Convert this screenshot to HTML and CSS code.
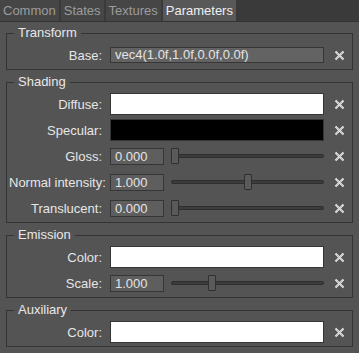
FILE: index.html
```html
<!DOCTYPE html>
<html lang="en">
<head>
  <meta charset="UTF-8">
  <title>Material parameters</title>
  <link rel="stylesheet" href="styles.css">
</head>
<body>
<div class="tabs">
  <div class="tab">Common</div>
  <div class="tab">States</div>
  <div class="tab">Textures</div>
  <div class="tab active">Parameters</div>
</div>

<div class="panel">
  <fieldset class="group">
    <legend>Transform</legend>
    <div class="row">
      <label>Base:</label>
      <div class="text-box">vec4(1.0f,1.0f,0.0f,0.0f)</div>
      <span class="clear"><svg width="11" height="11" viewBox="0 0 11 11"><path d="M1.5 1.5L9.5 9.5M9.5 1.5L1.5 9.5" class="x-outer"/><path d="M1.5 1.5L9.5 9.5M9.5 1.5L1.5 9.5" class="x-inner"/></svg></span>
    </div>
  </fieldset>

  <fieldset class="group">
    <legend>Shading</legend>
    <div class="row">
      <label>Diffuse:</label>
      <div class="color-box white"></div>
      <span class="clear"><svg width="11" height="11" viewBox="0 0 11 11"><path d="M1.5 1.5L9.5 9.5M9.5 1.5L1.5 9.5" class="x-outer"/><path d="M1.5 1.5L9.5 9.5M9.5 1.5L1.5 9.5" class="x-inner"/></svg></span>
    </div>
    <div class="row">
      <label>Specular:</label>
      <div class="color-box black"></div>
      <span class="clear"><svg width="11" height="11" viewBox="0 0 11 11"><path d="M1.5 1.5L9.5 9.5M9.5 1.5L1.5 9.5" class="x-outer"/><path d="M1.5 1.5L9.5 9.5M9.5 1.5L1.5 9.5" class="x-inner"/></svg></span>
    </div>
    <div class="row">
      <label>Gloss:</label>
      <div class="number-slider">
        <div class="num-box">0.000</div>
        <div class="slider"><div class="groove"></div><div class="handle" style="left: 0px"></div></div>
      </div>
      <span class="clear"><svg width="11" height="11" viewBox="0 0 11 11"><path d="M1.5 1.5L9.5 9.5M9.5 1.5L1.5 9.5" class="x-outer"/><path d="M1.5 1.5L9.5 9.5M9.5 1.5L1.5 9.5" class="x-inner"/></svg></span>
    </div>
    <div class="row">
      <label>Normal intensity:</label>
      <div class="number-slider">
        <div class="num-box">1.000</div>
        <div class="slider"><div class="groove"></div><div class="handle" style="left: 73px"></div></div>
      </div>
      <span class="clear"><svg width="11" height="11" viewBox="0 0 11 11"><path d="M1.5 1.5L9.5 9.5M9.5 1.5L1.5 9.5" class="x-outer"/><path d="M1.5 1.5L9.5 9.5M9.5 1.5L1.5 9.5" class="x-inner"/></svg></span>
    </div>
    <div class="row">
      <label>Translucent:</label>
      <div class="number-slider">
        <div class="num-box">0.000</div>
        <div class="slider"><div class="groove"></div><div class="handle" style="left: 0px"></div></div>
      </div>
      <span class="clear"><svg width="11" height="11" viewBox="0 0 11 11"><path d="M1.5 1.5L9.5 9.5M9.5 1.5L1.5 9.5" class="x-outer"/><path d="M1.5 1.5L9.5 9.5M9.5 1.5L1.5 9.5" class="x-inner"/></svg></span>
    </div>
  </fieldset>

  <fieldset class="group">
    <legend>Emission</legend>
    <div class="row">
      <label>Color:</label>
      <div class="color-box white"></div>
      <span class="clear"><svg width="11" height="11" viewBox="0 0 11 11"><path d="M1.5 1.5L9.5 9.5M9.5 1.5L1.5 9.5" class="x-outer"/><path d="M1.5 1.5L9.5 9.5M9.5 1.5L1.5 9.5" class="x-inner"/></svg></span>
    </div>
    <div class="row">
      <label>Scale:</label>
      <div class="number-slider">
        <div class="num-box">1.000</div>
        <div class="slider"><div class="groove"></div><div class="handle" style="left: 37px"></div></div>
      </div>
      <span class="clear"><svg width="11" height="11" viewBox="0 0 11 11"><path d="M1.5 1.5L9.5 9.5M9.5 1.5L1.5 9.5" class="x-outer"/><path d="M1.5 1.5L9.5 9.5M9.5 1.5L1.5 9.5" class="x-inner"/></svg></span>
    </div>
  </fieldset>

  <fieldset class="group">
    <legend>Auxiliary</legend>
    <div class="row">
      <label>Color:</label>
      <div class="color-box white"></div>
      <span class="clear"><svg width="11" height="11" viewBox="0 0 11 11"><path d="M1.5 1.5L9.5 9.5M9.5 1.5L1.5 9.5" class="x-outer"/><path d="M1.5 1.5L9.5 9.5M9.5 1.5L1.5 9.5" class="x-inner"/></svg></span>
    </div>
  </fieldset>
</div>
</body>
</html>
```

FILE: styles.css
```css
body {
  margin: 0;
  background: #545454;
  color: #e6e6e6;
  font-family: "Liberation Sans", Arial, sans-serif;
  font-size: 13px;
  overflow: hidden;
}
.tabs {
  display: flex;
  gap: 2px;
  height: 21px;
  background: #3a3a3a;
  border-bottom: 1px solid #333;
}
.tab {
  padding: 0 3px;
  line-height: 21px;
  background: #464646;
  color: #9c9c9c;
}
.tab.active {
  background: #585858;
  color: #f0f0f0;
}
.panel {
  display: flex;
  flex-direction: column;
  gap: 5px;
  padding: 4px 6px 0;
}
.group {
  margin: 0;
  padding: 2px 0 1px 2px;
  border: 1px solid #343434;
  min-width: 0;
}
.group legend {
  margin-left: 5px;
  padding: 0 4px;
  line-height: 14px;
  color: #e8e8e8;
}
.row {
  display: grid;
  grid-template-columns: 97px 214px 1fr;
  align-items: center;
  height: 26px;
}
.row label {
  text-align: right;
  margin-right: 4px;
  white-space: nowrap;
}
.row > :nth-child(2) {
  margin-left: 4px;
  width: 214px;
  box-sizing: border-box;
}
.text-box {
  height: 16px;
  line-height: 14px;
  padding: 0 4px;
  background: #636363;
  border: 1px solid #363636;
  color: #e4e4e4;
}
.color-box {
  height: 22px;
  border: 1px solid #363636;
}
.color-box.white {
  background: #ffffff;
}
.color-box.black {
  background: #000000;
}
.number-slider {
  display: flex;
  align-items: center;
  gap: 7px;
}
.num-box {
  width: 54px;
  height: 17px;
  box-sizing: border-box;
  line-height: 15px;
  padding: 0 4px;
  background: #5e5e5e;
  border: 1px solid #363636;
  color: #e4e4e4;
}
.slider {
  position: relative;
  flex: 1;
  height: 16px;
}
.groove {
  position: absolute;
  left: 0;
  right: 0;
  top: 6px;
  height: 4px;
  background: #3c3c3c;
  border: 1px solid #2e2e2e;
  border-radius: 3px;
  box-sizing: border-box;
}
.handle {
  position: absolute;
  top: 0;
  width: 8px;
  height: 16px;
  box-sizing: border-box;
  background: #5a5a5a;
  border: 1px solid #303030;
  border-radius: 1px;
}
.clear {
  display: flex;
  justify-content: center;
  align-items: center;
  padding-left: 6px;
}
.x-outer {
  stroke: #e6e6e6;
  stroke-width: 2;
  fill: none;
}
.x-inner {
  stroke: #9a9a9a;
  stroke-width: 0.8;
  stroke-dasharray: 1 1;
  fill: none;
}
```
